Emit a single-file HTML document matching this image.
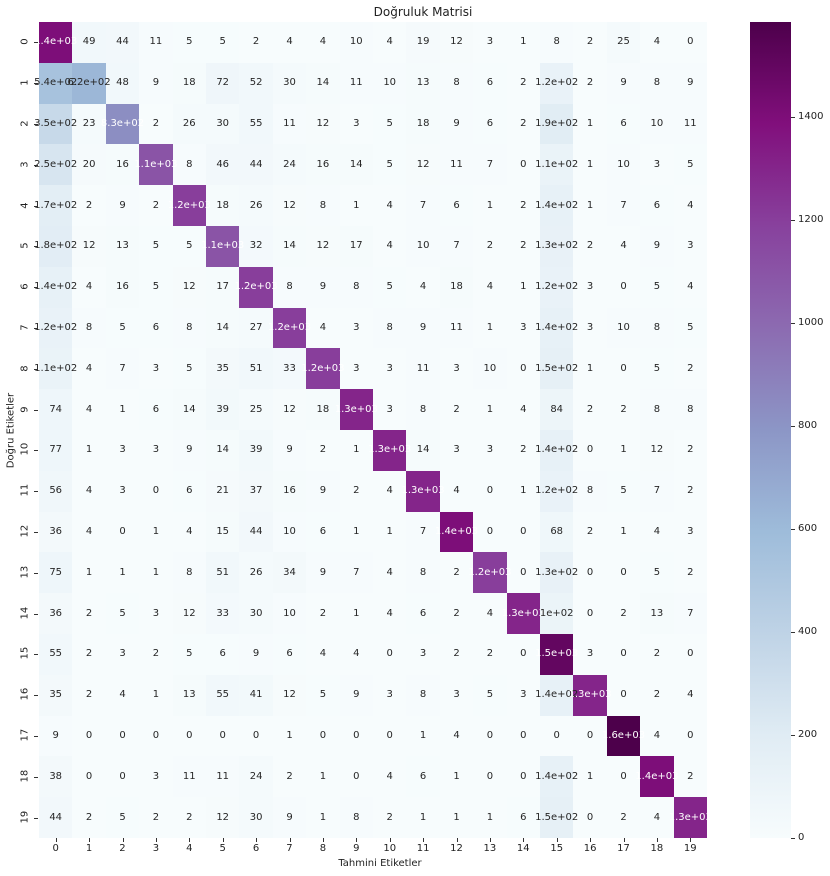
<!DOCTYPE html><html><head><meta charset="utf-8"><style>
body{margin:0;width:830px;height:876px;background:#fff;font-family:"DejaVu Sans","Liberation Sans",sans-serif;position:relative;overflow:hidden}
.c{position:absolute}
.l{position:absolute;font-size:10px;white-space:nowrap;text-align:center;line-height:12px}
.t{position:absolute;font-size:10px;color:#222}
</style></head><body>
<div class="t" style="left:0;width:830px;text-align:center;top:5px;font-size:12px;left:8px">Doğruluk Matrisi</div>
<div class="t" style="left:0;width:760px;text-align:center;top:858px">Tahmini Etiketler</div>
<div class="t" style="left:-34px;top:425px;width:90px;text-align:center;transform:rotate(-90deg)">Doğru Etiketler</div>
<div id="cb" style="position:absolute;left:750px;top:22px;width:41px;height:816px"></div>
<div id="m"></div>
<script>
var D=[[1400,49,44,11,5,5,2,4,4,10,4,19,12,3,1,8,2,25,4,0],
[540,620,48,9,18,72,52,30,14,11,10,13,8,6,2,120,2,9,8,9],
[350,23,830,2,26,30,55,11,12,3,5,18,9,6,2,190,1,6,10,11],
[250,20,16,1100,8,46,44,24,16,14,5,12,11,7,0,110,1,10,3,5],
[170,2,9,2,1200,18,26,12,8,1,4,7,6,1,2,140,1,7,6,4],
[180,12,13,5,5,1100,32,14,12,17,4,10,7,2,2,130,2,4,9,3],
[140,4,16,5,12,17,1200,8,9,8,5,4,18,4,1,120,3,0,5,4],
[120,8,5,6,8,14,27,1200,4,3,8,9,11,1,3,140,3,10,8,5],
[110,4,7,3,5,35,51,33,1200,3,3,11,3,10,0,150,1,0,5,2],
[74,4,1,6,14,39,25,12,18,1300,3,8,2,1,4,84,2,2,8,8],
[77,1,3,3,9,14,39,9,2,1,1300,14,3,3,2,140,0,1,12,2],
[56,4,3,0,6,21,37,16,9,2,4,1300,4,0,1,120,8,5,7,2],
[36,4,0,1,4,15,44,10,6,1,1,7,1400,0,0,68,2,1,4,3],
[75,1,1,1,8,51,26,34,9,7,4,8,2,1200,0,130,0,0,5,2],
[36,2,5,3,12,33,30,10,2,1,4,6,2,4,1300,100,0,2,13,7],
[55,2,3,2,5,6,9,6,4,4,0,3,2,2,0,1500,3,0,2,0],
[35,2,4,1,13,55,41,12,5,9,3,8,3,5,3,140,1300,0,2,4],
[9,0,0,0,0,0,0,1,0,0,0,1,4,0,0,0,0,1600,4,0],
[38,0,0,3,11,11,24,2,1,0,4,6,1,0,0,140,1,0,1400,2],
[44,2,5,2,2,12,30,9,1,8,2,1,1,1,6,150,0,2,4,1300]];
var S=["f7fcfd","e0ecf4","bfd3e6","9ebcda","8c96c6","8c6bb1","88419d","810f7c","4d004b"].map(h=>[0,2,4].map(i=>parseInt(h.substr(i,2),16)));
var V=1584;
function col(v){var t=Math.min(1,v/V)*8,i=Math.min(7,Math.floor(t)),f=t-i;return S[i].map((a,k)=>Math.round(a+(S[i+1][k]-a)*f));}
function lum(c){var r=c.map(x=>{x/=255;return x<=.03928?x/12.92:Math.pow((x+.055)/1.055,2.4)});return .2126*r[0]+.7152*r[1]+.0722*r[2];}
function fmt(v){if(v>=100){var e=Math.floor(Math.log10(v)),m=Math.round(v/Math.pow(10,e-1))/10;return m+"e+0"+e;}return ""+v;}
var L=39,T=22,W=33.4,H=40.8,h="",lb="";
for(var r=0;r<20;r++)for(var c=0;c<20;c++){var v=D[r][c],k=col(v);
h+='<div class="c" style="left:'+(L+c*W)+'px;top:'+(T+r*H)+'px;width:'+(W+0.5)+'px;height:'+(H+0.5)+'px;background:rgb('+k+')"></div>';
lb+='<div class="l" style="left:'+(L+c*W+W/2-30)+'px;width:60px;top:'+(T+r*H+H/2-6)+'px;color:'+(lum(k)<.408?'#fff':'#262626')+'">'+fmt(v)+'</div>';}
h+=lb;
for(var i=0;i<20;i++){h+='<div class="t" style="left:'+(L+i*W)+'px;width:'+W+'px;text-align:center;top:843px">'+i+'</div>';
h+='<div class="t" style="left:19px;top:'+(T+i*H+H/2-6)+'px;transform:rotate(-90deg);width:12px;text-align:center;transform-origin:center">'+i+'</div>';
h+='<div style="position:absolute;left:34px;width:4px;height:1px;background:#333;top:'+(T+i*H+H/2)+'px"></div>';
h+='<div style="position:absolute;top:838px;width:1px;height:4px;background:#333;left:'+(L+i*W+W/2)+'px"></div>';}
for(var v=0;v<=1400;v+=200){var y=838-v*816/V;h+='<div style="position:absolute;left:791px;width:4px;height:1px;background:#333;top:'+y+'px"></div><div class="t" style="left:798px;top:'+(y-6)+'px">'+v+'</div>';}
document.getElementById('m').innerHTML=h;
var g=[];for(var i=0;i<=8;i++)g.push('rgb('+S[8-i]+') '+(i*12.5)+'%');
document.getElementById('cb').style.background='linear-gradient(to bottom,'+g.join(',')+')';
</script></body></html>
